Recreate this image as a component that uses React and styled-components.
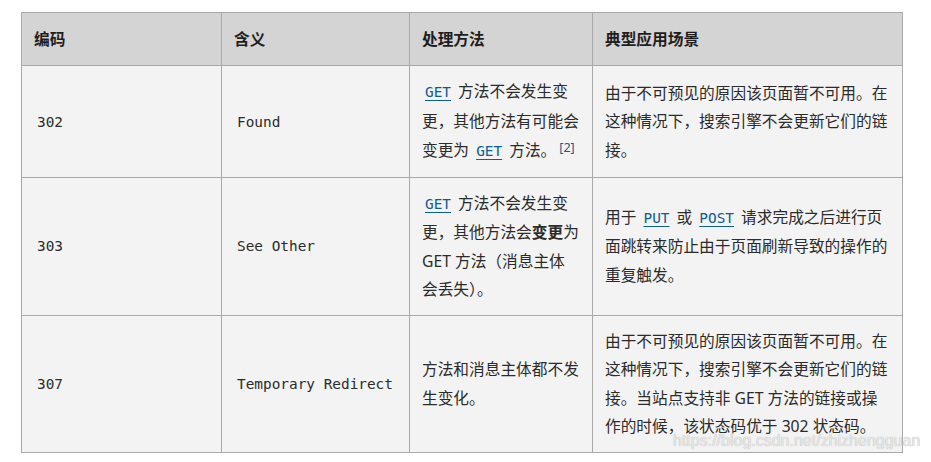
import React from 'react';
import styled, { createGlobalStyle } from 'styled-components';

// Cores e fontes da tabela
const theme = {
  headerBg: '#d4d4d4',
  cellBg: '#f3f3f3',
  border: '#a9a9a9',
  text: '#2b2b2b',
  link: '#0e5d8c',
  font: '"Noto Sans", "Noto Sans CJK SC", sans-serif',
  mono: '"DejaVu Sans Mono", "Liberation Mono", monospace'
};

const GlobalStyle = createGlobalStyle`
  body {
    margin: 0;
    background: #fff;
    font-family: ${theme.font};
  }
`;

const Page = styled.div`
  position: relative;
  width: 931px;
  height: 462px;
  padding: 12px 0 0 21px;
  box-sizing: border-box;
  overflow: hidden;
`;

const Table = styled.table`
  border-collapse: collapse;
  table-layout: fixed;
  width: 881px;
  font-size: 15.7px;
  line-height: 28.5px;
  color: ${theme.text};
`;

const HeadCell = styled.th`
  background: ${theme.headerBg};
  border: 1px solid ${theme.border};
  padding: 12px;
  line-height: 28px;
  text-align: left;
  font-weight: bold;
  color: #1e1e1e;
`;

const Cell = styled.td`
  background: ${theme.cellBg};
  border: 1px solid ${theme.border};
  padding: 11px 12px;
  vertical-align: middle;
  word-break: break-all;
`;

const Code = styled.code`
  font-family: ${theme.mono};
  font-size: 14.4px;
  padding: 0 3px;
`;

const Link = styled.a`
  color: ${theme.link};
  text-decoration: underline;
  text-underline-offset: 3px;
`;

const Sup = styled.sup`
  font-size: 12.5px;
  line-height: 26px;
  vertical-align: 4px;
  color: ${theme.link};
  margin-left: 3px;
`;

const Watermark = styled.div`
  position: absolute;
  left: 673px;
  top: 432px;
  font-family: "Liberation Sans", Arial, sans-serif;
  font-size: 16px;
  color: #e8e8e8;
  text-shadow: 0 0 1px #a8a8a8;
  white-space: nowrap;
`;

const MethodLink = ({ children }) => (
  <Link href="#">
    <Code>{children}</Code>
  </Link>
);

const rows = [
  {
    code: '302',
    name: 'Found',
    method: (
      <>
        <MethodLink>GET</MethodLink> 方法不会发生变更，其他方法有可能会变更为 <MethodLink>GET</MethodLink> 方法。
        <Sup>[2]</Sup>
      </>
    ),
    usage: '由于不可预见的原因该页面暂不可用。在这种情况下，搜索引擎不会更新它们的链接。'
  },
  {
    code: '303',
    name: 'See Other',
    method: (
      <>
        <MethodLink>GET</MethodLink> 方法不会发生变更，其他方法会<strong>变更</strong>为 GET 方法（消息主体会丢失）。
      </>
    ),
    usage: (
      <>
        用于 <MethodLink>PUT</MethodLink> 或 <MethodLink>POST</MethodLink> 请求完成之后进行页面跳转来防止由于页面刷新导致的操作的重复触发。
      </>
    )
  },
  {
    code: '307',
    name: 'Temporary Redirect',
    method: '方法和消息主体都不发生变化。',
    usage: '由于不可预见的原因该页面暂不可用。在这种情况下，搜索引擎不会更新它们的链接。当站点支持非 GET 方法的链接或操作的时候，该状态码优于 302 状态码。'
  }
];

const App = () => (
  <Page>
    <GlobalStyle />
    <Table>
      <colgroup>
        <col style={{ width: 200 }} />
        <col style={{ width: 188 }} />
        <col style={{ width: 183 }} />
        <col style={{ width: 310 }} />
      </colgroup>
      <thead>
        <tr>
          <HeadCell>编码</HeadCell>
          <HeadCell>含义</HeadCell>
          <HeadCell>处理方法</HeadCell>
          <HeadCell>典型应用场景</HeadCell>
        </tr>
      </thead>
      <tbody>
        {rows.map((row) => (
          <tr key={row.code}>
            <Cell><Code>{row.code}</Code></Cell>
            <Cell><Code>{row.name}</Code></Cell>
            <Cell>{row.method}</Cell>
            <Cell>{row.usage}</Cell>
          </tr>
        ))}
      </tbody>
    </Table>
    <Watermark>https://blog.csdn.net/zhizhengguan</Watermark>
  </Page>
);

export default App;
